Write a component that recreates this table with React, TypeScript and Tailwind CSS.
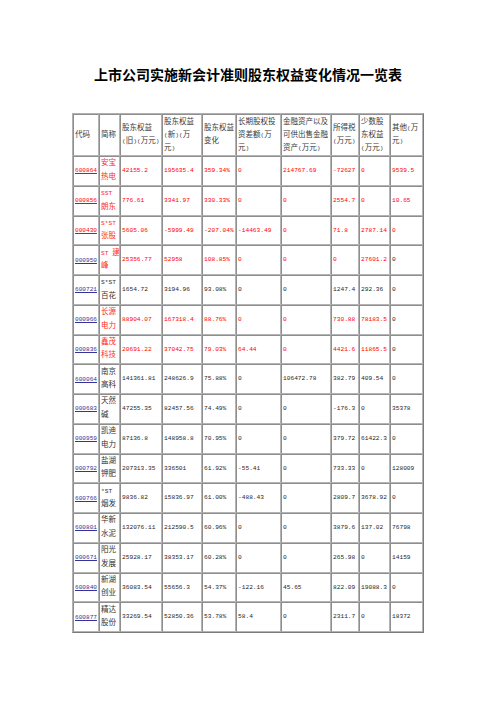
import React from "react";

type Row = {
  code: string;
  codeRed?: boolean;
  name: string[];
  red?: boolean;
  lastRed?: boolean;
  vals: string[];
};

const rows: Row[] = [
  { code: "600864", codeRed: true, red: true, lastRed: true, name: ["安宝", "热电"], vals: ["42155.2", "195635.4", "359.34%", "0", "214767.69", "-72627", "0", "9539.5"] },
  { code: "000856", codeRed: true, red: true, lastRed: true, name: ["SST", "朗东"], vals: ["776.61", "3341.97", "330.33%", "0", "0", "2554.7", "0", "10.65"] },
  { code: "000430", codeRed: true, red: true, lastRed: true, name: ["S*ST", "张股"], vals: ["5605.06", "-5999.49", "-207.04%", "-14463.49", "0", "71.8", "2787.14", "0"] },
  { code: "000950", red: true, name: ["ST 建", "峰"], vals: ["25356.77", "52958", "108.85%", "0", "0", "0", "27601.2", "0"] },
  { code: "600721", name: ["S*ST", "百花"], vals: ["1654.72", "3194.96", "93.08%", "0", "0", "1247.4", "292.36", "0"] },
  { code: "000966", red: true, name: ["长源", "电力"], vals: ["88904.07", "167318.4", "88.76%", "0", "0", "730.88", "78183.5", "0"] },
  { code: "000836", red: true, name: ["鑫茂", "科技"], vals: ["20691.22", "37042.75", "79.03%", "64.44", "0", "4421.6", "11865.5", "0"] },
  { code: "600064", name: ["南京", "高科"], vals: ["141361.81", "248626.9", "75.88%", "0", "106472.78", "382.79", "409.54", "0"] },
  { code: "000683", name: ["天然", "碱"], vals: ["47255.35", "82457.56", "74.49%", "0", "0", "-176.3", "0", "35378"] },
  { code: "000959", name: ["凯迪", "电力"], vals: ["87136.8", "148958.8", "70.95%", "0", "0", "379.72", "61422.3", "0"] },
  { code: "000792", name: ["盐湖", "钾肥"], vals: ["207313.35", "336501", "61.92%", "-55.41", "0", "733.33", "0", "128009"] },
  { code: "600766", name: ["*ST", "烟发"], vals: ["9836.82", "15836.97", "61.00%", "-488.43", "0", "2809.7", "3678.92", "0"] },
  { code: "600801", name: ["华新", "水泥"], vals: ["132076.11", "212590.5", "60.96%", "0", "0", "3879.6", "137.02", "76798"] },
  { code: "000671", name: ["阳光", "发展"], vals: ["25928.17", "38353.17", "60.28%", "0", "0", "265.98", "0", "14159"] },
  { code: "600840", name: ["新湖", "创业"], vals: ["36083.54", "55656.3", "54.37%", "-122.16", "45.65", "822.09", "19088.3", "0"] },
  { code: "600877", name: ["精达", "股份"], vals: ["33269.54", "52850.36", "53.78%", "58.4", "0", "2311.7", "0", "18372"] },
];

const headers: string[][] = [
  ["代码"],
  ["简称"],
  ["股东权益", "(旧)(万元)"],
  ["股东权益", "(新)(万", "元)"],
  ["股东权益", "变化"],
  ["长期股权投", "资差额(万", "元)"],
  ["金融资产以及", "可供出售金融", "资产(万元)"],
  ["所得税", "(万元)"],
  ["少数股", "东权益", "(万元)"],
  ["其他(万", "元)"],
];

// ascii runs are set smaller so they sit at half the width of a CJK glyph
function Txt({ s }: { s: string }) {
  const parts = s.split(/([\x20-\x7e]+)/).filter(Boolean);
  return (
    <>
      {parts.map((p, i) =>
        /^[\x20-\x7e]+$/.test(p) ? (
          <span key={i} className="text-[6.2px]">{p}</span>
        ) : (
          <span key={i}>{p}</span>
        )
      )}
    </>
  );
}

const cell =
  "border border-t-[#8e8e8e] border-l-[#8e8e8e] border-r-[#b4b4b4] border-b-[#b4b4b4] align-middle px-[1px] whitespace-nowrap overflow-hidden";

export default function App() {
  return (
    <div className="min-h-screen w-full bg-white pt-[67px] font-['Noto_Sans_CJK_SC',sans-serif]">
      <h1 className="text-center text-[14px] leading-[14px] font-bold text-black">
        上市公司实施新会计准则股东权益变化情况一览表
      </h1>

      <table className="mx-auto mt-[32px] w-[350px] table-fixed border-separate border-spacing-0 border border-t-[#b0b0b0] border-l-[#b0b0b0] border-r-[#7a7a7a] border-b-[#7a7a7a] font-['Liberation_Mono','Noto_Sans_CJK_SC',monospace] text-[7.5px]">
        <colgroup>
          <col className="w-[26px]" />
          <col className="w-[21px]" />
          <col className="w-[42px]" />
          <col className="w-[40px]" />
          <col className="w-[34px]" />
          <col className="w-[45px]" />
          <col className="w-[50px]" />
          <col className="w-[28px]" />
          <col className="w-[31px]" />
          <col className="w-[33px]" />
        </colgroup>
        <thead>
          <tr className="h-[42px]">
            {headers.map((h, i) => (
              <th key={i} className={`${cell} text-left font-normal leading-[13px] text-[#3a3a3a]`}>
                {h.map((l, j) => (
                  <div key={j}>
                    <Txt s={l} />
                  </div>
                ))}
              </th>
            ))}
          </tr>
        </thead>
        <tbody>
          {rows.map((r) => (
            <tr key={r.code} className="h-[29.75px]">
              <td className={`${cell} pl-[1px] pr-0 text-[6.1px]`}>
                <span
                  className={
                    r.codeRed
                      ? "text-[#ff0000] underline decoration-[#ff0000] underline-offset-[1px]"
                      : "text-[#333399] underline decoration-[#333399] underline-offset-[1px]"
                  }
                >
                  {r.code}
                </span>
              </td>
              <td className={`${cell} leading-[13.5px] ${r.red ? "text-[#ff2a2a]" : "text-[#333333]"}`}>
                {r.name.map((l, j) => (
                  <div key={j}>
                    <Txt s={l} />
                  </div>
                ))}
              </td>
              {r.vals.map((v, i) => {
                const isRed = i === 7 ? r.lastRed : r.red;
                return (
                  <td
                    key={i}
                    className={`${cell} text-[6.2px] leading-[13.5px] ${isRed ? "text-[#ff0000]" : "text-[#1f1f1f]"}`}
                  >
                    {v}
                  </td>
                );
              })}
            </tr>
          ))}
        </tbody>
      </table>
    </div>
  );
}
